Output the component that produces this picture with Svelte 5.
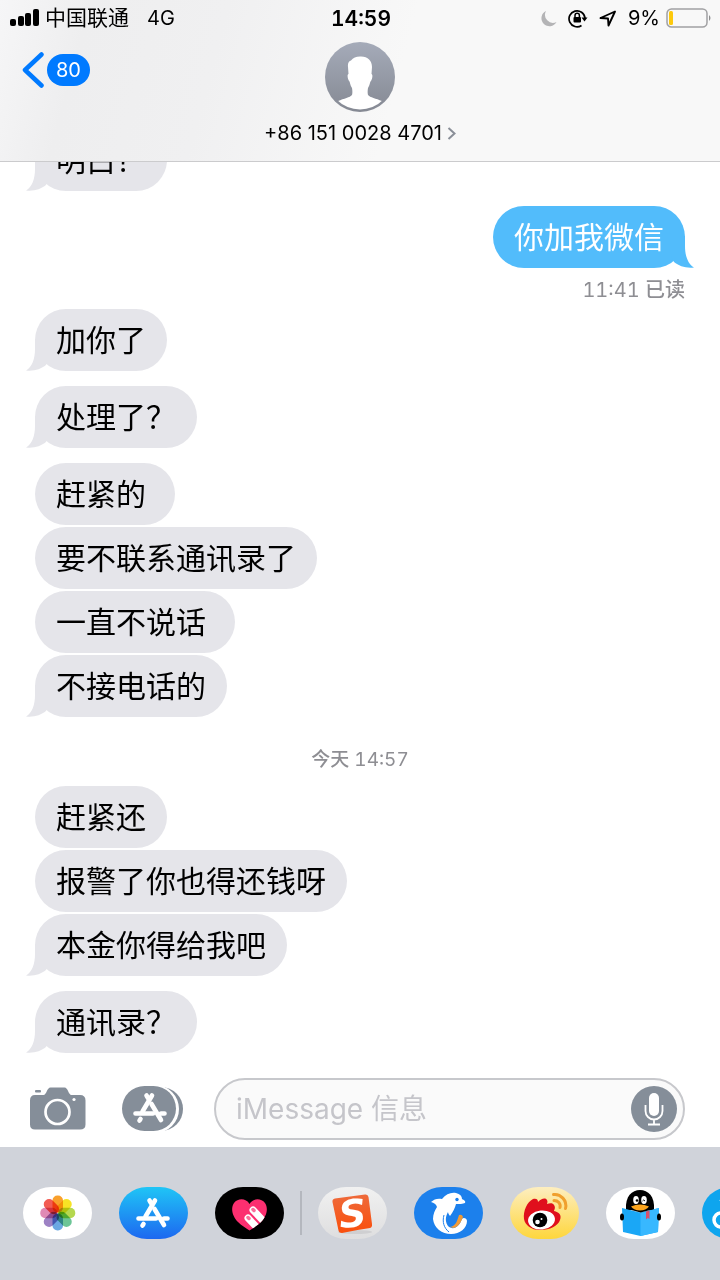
<script>
	let draft = $state('');

	// kind: in | out | receipt | time
	const thread = [
		{ kind: 'in', text: '明白？', tail: true },
		{ kind: 'out', text: '你加我微信', tail: true, first: true },
		{ kind: 'receipt', time: '11:41', text: '已读' },
		{ kind: 'in', text: '加你了', tail: true },
		{ kind: 'in', text: '处理了？', tail: true, first: true },
		{ kind: 'in', text: '赶紧的 ', first: true },
		{ kind: 'in', text: '要不联系通讯录了' },
		{ kind: 'in', text: '一直不说话 ' },
		{ kind: 'in', text: '不接电话的', tail: true },
		{ kind: 'time', text: '今天', time: '14:57' },
		{ kind: 'in', text: '赶紧还' },
		{ kind: 'in', text: '报警了你也得还钱呀' },
		{ kind: 'in', text: '本金你得给我吧', tail: true },
		{ kind: 'in', text: '通讯录？', tail: true, first: true }
	];

	const petals = ['#f9a02c', '#f7e325', '#b5d84f', '#6cc596', '#6ba8e2', '#9d82c4', '#e08ab5', '#f25c53'];
</script>

{#snippet storeGlyph()}
	<g fill="none" stroke="#fff" stroke-width="4.600" stroke-linecap="round">
		<path d="M19 2.500 9.500 18.500" />
		<path d="M13.500 2.500 15 5M18.500 11 28 27" />
		<path d="M2.500 20.500H20M28 20.500H31.500" />
		<path d="M7.500 26 6.500 27.500" />
	</g>
{/snippet}

<div class="screen">
	<header>
		<div class="status">
			<div class="carrier">
				<svg width="29" height="18" viewBox="0 0 29 18" aria-hidden="true">
					<rect x="0" y="10" width="6" height="7" rx="2" />
					<rect x="8" y="7" width="6" height="10" rx="2" />
					<rect x="15" y="4" width="6" height="13" rx="2" />
					<rect x="23" y="0" width="6" height="17" rx="2" />
				</svg>
				<span>中国联通</span>
				<span class="network">4G</span>
			</div>
			<time class="clock">14:59</time>
			<div class="indicators">
				<svg width="16" height="17" viewBox="0 0 16 17" aria-hidden="true">
					<path d="M5 1A8 8 0 1 0 15.500 12A8 8 0 0 1 5 1Z" fill="#b4b4b6" />
				</svg>
				<svg width="20" height="19" viewBox="0 0 20 19" aria-hidden="true">
					<path d="M13.500 16.500A8 8 0 1 1 17 9" fill="none" stroke="#000" stroke-width="1.700" />
					<path d="M13.500 8.500h6l-3 4z" />
					<rect x="5.500" y="8" width="7.500" height="5.500" rx="1" />
					<path d="M7 8V6.500a2.200 2.200 0 0 1 4.400 0V8" fill="none" stroke="#000" stroke-width="1.500" />
				</svg>
				<svg width="18" height="17" viewBox="0 0 18 17" aria-hidden="true">
					<path d="M16 1.500 1.500 8l7.500.500.500 7z" fill="none" stroke="#000" stroke-width="1.900" stroke-linejoin="round" />
				</svg>
				<span>9%</span>
				<svg class="battery" width="46" height="20" viewBox="0 0 46 20" aria-hidden="true">
					<rect x="1" y="1" width="40" height="18" rx="4.500" fill="none" stroke="#a0a0a2" stroke-width="1.500" />
					<rect x="3" y="3" width="4" height="14" rx="1.500" fill="#fdc90c" />
					<path d="M43 7q3 3 0 6z" fill="#8e8e90" />
				</svg>
			</div>
		</div>

		<nav>
			<button class="back" aria-label="返回 80">
				<svg width="22" height="36" viewBox="0 0 22 36" aria-hidden="true">
					<path d="M19.500 2.500 3 18l16.500 15.500" fill="none" stroke="#007aff" stroke-width="4.500" stroke-linecap="round" stroke-linejoin="round" />
				</svg>
				<span class="unread">80</span>
			</button>
			<button class="contact">
				<svg width="70" height="70" viewBox="0 0 70 70" aria-hidden="true">
					<defs>
						<linearGradient id="avatar" x2="0" y2="1">
							<stop offset="0" stop-color="#a5abb9" />
							<stop offset="1" stop-color="#858993" />
						</linearGradient>
						<clipPath id="face"><circle cx="35" cy="35" r="32.500" /></clipPath>
					</defs>
					<circle cx="35" cy="35" r="35" fill="url(#avatar)" />
					<path clip-path="url(#face)" fill="#fff" d="M35 14.500c7.500-.5 12 4 12 10.500l-.5 7c1.500.5 1 4-.5 7-1 0-1 4-3 7-.5 3-.5 5 0 7 2 2.500 8 3.500 14 6v11H13V59c6-2.500 12-3.500 14-6 .5-2 .5-4 0-7-2-3-2-7-3-7-1.500-3-2-6.500-.5-7l-.5-7c-.5-4 1-6 3-6.500 2-2.500 5-4 9-4z" />
				</svg>
				<span class="number">
					+86 151 0028 4701
					<svg width="9" height="13" viewBox="0 0 9 13" aria-hidden="true">
						<path d="m1.500 1 6 5.500-6 5.500" fill="none" stroke="#8a8f98" stroke-width="2" />
					</svg>
				</span>
			</button>
		</nav>
	</header>

	<main>
		{#each thread as item}
			{#if item.kind === 'time'}
				<p class="day"><b>{item.text}</b> {item.time}</p>
			{:else if item.kind === 'receipt'}
				<p class="receipt">{item.time} <b>{item.text}</b></p>
			{:else}
				<div class="bubble {item.kind}" class:first={item.first}>
					{#if item.tail}
						<svg class="tail" width="24" height="32" viewBox="0 0 24 32" aria-hidden="true">
							<path d="M10 0V10C10 20 7 28 1 31.500C9 32.500 16 30 21 26L24 20V0Z" />
						</svg>
					{/if}
					<span>{item.text}</span>
				</div>
			{/if}
		{/each}
	</main>

	<form class="composer" onsubmit={(e) => e.preventDefault()}>
		<button type="button" aria-label="相机">
			<svg width="57" height="44" viewBox="0 0 57 44" aria-hidden="true">
				<path fill="#858e99" d="M6 8h8.500c3 0 3.500-7.500 7-7.500h14c3.500 0 4 7.500 7 7.500H51q5.500 0 5.500 5.500v24q0 5-5.500 5H6q-5 0-5-5v-24Q1 8 6 8z" />
				<rect x="6" y="3" width="6" height="2.500" rx="1" fill="#858e99" />
				<circle cx="28.500" cy="25" r="12" fill="none" stroke="#fff" stroke-width="2.700" />
				<circle cx="45" cy="12.500" r="1.600" fill="#fff" />
			</svg>
		</button>
		<button type="button" aria-label="App">
			<svg width="62" height="46" viewBox="0 0 62 46" aria-hidden="true">
				<rect x="6" y="1" width="55" height="44" rx="22" fill="#858e99" />
				<rect x="-1" y="-1" width="58" height="48" rx="24" fill="#fff" />
				<rect x="0" y="0" width="54" height="45" rx="22.500" fill="#858e99" />
				<g transform="translate(11 7)">{@render storeGlyph()}</g>
			</svg>
		</button>
		<div class="field">
			<input type="text" aria-label="iMessage 信息" placeholder="iMessage 信息" bind:value={draft} />
			<button type="button" class="mic" aria-label="录音">
				<svg width="46" height="46" viewBox="0 0 46 46" aria-hidden="true">
					<circle cx="23" cy="23" r="23" fill="#858e99" />
					<rect x="18" y="7" width="10" height="23" rx="5" fill="#fff" />
					<path d="M14.500 19v6a8.500 8.500 0 0 0 17 0v-6M23 33.500v5M17 38.500h12" fill="none" stroke="#fff" stroke-width="1.800" />
				</svg>
			</button>
		</div>
	</form>

	<footer>
		<div class="apps">
			<button aria-label="照片" class="white">
				<svg viewBox="0 0 69 52" aria-hidden="true">
					<g class="petals">
						{#each petals as color, i}
							<rect x="29.500" y="8.500" width="10.500" height="17" rx="5" fill={color} transform="rotate({i * 45} 34.750 26)" />
						{/each}
					</g>
				</svg>
			</button>
			<button aria-label="App Store" class="store">
				<svg viewBox="0 0 69 52" aria-hidden="true">
					<g transform="translate(17 11)">{@render storeGlyph()}</g>
				</svg>
			</button>
			<button aria-label="Digital Touch" class="touch">
				<svg viewBox="0 0 69 52" aria-hidden="true">
					<defs>
						<clipPath id="heart"><path d="M34.500 17C31 11 23 11 19 16c-4 6-1 14 4 19 4 4 8 6 11.500 8.500C38 41 42 39 46 35c5-5 8-13 4-19-4-5-12-5-15.500 1z" /></clipPath>
					</defs>
					<g clip-path="url(#heart)">
						<path d="M0 0h69v52H0z" fill="#fc2f70" />
						<g fill="none" stroke-linecap="round">
							<path d="m38 23 16 17M33 31l16 17" stroke="#fff" stroke-width="7" />
							<path d="m38 22.500 1 1M33 30.500l1 1" stroke="#fa6f9b" stroke-width="3.500" />
						</g>
					</g>
				</svg>
			</button>
		</div>
		<hr />
		<div class="apps">
			<button aria-label="搜狗输入法" class="sogou">
				<svg viewBox="0 0 69 52" aria-hidden="true">
					<defs>
						<linearGradient id="orange" x2="0" y2="1">
							<stop offset="0" stop-color="#ee6a3b" />
							<stop offset="1" stop-color="#fa4f0c" />
						</linearGradient>
					</defs>
					<ellipse cx="37" cy="45" rx="17" ry="2" fill="#cfcfd1" />
					<path d="M17 11.500 47 7.500q3-.5 3.500 2.500l3.500 27q.5 3-2 4-14 2-28 5-3 0-3.500-2.500L14.500 15q-.5-3 2.500-3.500z" fill="url(#orange)" />
					<text x="34.500" y="40" transform="rotate(-6 34 26)" text-anchor="middle">S</text>
				</svg>
			</button>
			<button aria-label="携程" class="ctrip">
				<svg viewBox="0 0 69 52" aria-hidden="true">
					<path fill="#fff" d="M17 15c3-3 7-4 11-3 4-5 9-7 14-6 4 1 6 3 6 6 2 1 4 2 3 4-2 1-6 1-9 1-1 4-3 8-6 12-1-1-2-3-2-4-3 5-3 11 1 15 5 3 10 0 13-8 1-2 5-1 5 2 0 7-7 13-16 13-9 0-17-6-18-15 0-5 2-9 4-12-1-3-3-4-6-5z" />
					<path d="M45 28q3-1 4 2c-2 5-4 9-9 11-2 0-3-1-4-1 6-1 7-6 9-12z" fill="#f09a36" />
					<path d="M30 28c-2 7 0 13 5 17" fill="none" stroke="#1c80ec" stroke-width="1" />
					<circle cx="43" cy="12.500" r="1.700" fill="#1c80ec" />
				</svg>
			</button>
			<button aria-label="微博" class="weibo">
				<svg viewBox="0 0 69 52" aria-hidden="true">
					<path fill="#e00f1c" d="M14 32c-1-8 3-17 9-20 4-1 5 1 5 3 3-3 7-5 9-2 1 2 0 3 0 4 3-1 6-1 7 1 2 3 0 5 0 6 5 1 8 4 6 9-2 6-10 10-20 10-9 0-15-5-16-11z" />
					<ellipse cx="31.500" cy="33" rx="13.500" ry="9.500" transform="rotate(-6 31 33)" fill="#fff" />
					<circle cx="30" cy="33" r="7.300" />
					<circle cx="27.500" cy="35" r="2.300" fill="#fff" />
					<circle cx="31.500" cy="32" r="1" fill="#fff" />
					<path d="M43.500 7.500c7-1 14 6 12 14M44 13.500c4 0 7 3 6 7" fill="none" stroke="#f0a02d" stroke-width="3" stroke-linecap="round" />
				</svg>
			</button>
			<button aria-label="QQ阅读" class="white">
				<svg viewBox="0 0 69 52" aria-hidden="true">
					<path d="M20 23C19 9 26 3 34 3s15 6 14 20z" />
					<ellipse cx="30" cy="13" rx="2.800" ry="3.900" fill="#fff" />
					<ellipse cx="38" cy="13" rx="2.800" ry="3.900" fill="#fff" />
					<circle cx="31" cy="13.500" r="1.300" />
					<path d="M36.500 14q1-2 2.500 0" fill="none" stroke="#000" />
					<path d="m16 21 18 4.500L53 21l-1 24-17.500 4L17 45z" fill="#1aa7f6" />
					<path d="m34.500 26 18.500-5-1 24-17.500 4z" fill="#38b8ff" />
					<path d="M20 21.500 34.500 25.500 48 22v-3H20z" />
					<path d="M25 19.500q9-4 18 0-3 4-9 4t-9-4z" fill="#fba41c" />
					<path d="M40 24.500 43.500 23.500v8.500l-1.700-1-1.800 1.500z" fill="#d9506b" />
					<ellipse cx="16" cy="30" rx="2" ry="3.500" />
					<ellipse cx="53" cy="30" rx="2" ry="3.500" />
				</svg>
			</button>
			<button aria-label="更多" class="more">
				<svg viewBox="0 0 69 52" aria-hidden="true">
					<path d="M18 14q5-4 12-3" fill="none" stroke="#fff" stroke-width="2" />
					<circle cx="19" cy="33" r="7" fill="none" stroke="#fff" stroke-width="3.500" />
				</svg>
			</button>
		</div>
	</footer>
</div>

<style>
	:global(body) {
		margin: 0;
		background: #fff;
	}

	.screen {
		display: flex;
		flex-direction: column;
		height: 100vh;
		overflow: hidden;
		font-family: Inter, 'Noto Sans CJK SC', sans-serif;
		font-size: 20px;
		color: #000;
	}

	button {
		padding: 0;
		border: 0;
		background: none;
		font: inherit;
		color: inherit;
		cursor: pointer;
	}

	svg {
		display: block;
		flex: none;
	}

	p {
		margin: 0;
	}

	/* header */
	header {
		flex: none;
		background: linear-gradient(105deg, #f6f6f7 0%, #eeeeef 12%, #f0f0f1 30%, #f8f8f8 55%);
		border-bottom: 1px solid #cbcbcd;
	}

	.status,
	nav {
		display: grid;
		grid-template-columns: 1fr auto 1fr;
	}

	.status {
		align-items: center;
		height: 36px;
		padding: 0 8px 0 10px;
	}

	.carrier,
	.indicators {
		display: flex;
		align-items: center;
	}

	.carrier {
		gap: 6px;
		font-size: 21px;
		line-height: 24px;
	}

	.network {
		margin-left: 12px;
		font-size: 20px;
	}

	.clock {
		font-size: 21px;
		font-weight: 600;
		font-variant-numeric: tabular-nums;
	}

	.indicators {
		justify-content: flex-end;
		gap: 11px;
	}

	.battery {
		margin-left: -5px;
	}

	.back {
		display: flex;
		align-items: center;
		align-self: start;
		justify-self: start;
		gap: 3px;
		margin: 16px 0 0 22px;
	}

	.unread {
		padding: 0 9px;
		border-radius: 16px;
		background: #007aff;
		color: #fff;
		line-height: 32px;
	}

	.contact {
		display: flex;
		flex-direction: column;
		align-items: center;
		gap: 8px;
		padding: 6px 0 15px;
	}

	.number {
		display: flex;
		align-items: center;
		gap: 5px;
		line-height: 26px;
	}

	/* conversation */
	main {
		flex: 1;
		display: flex;
		flex-direction: column;
		justify-content: flex-end;
		align-items: flex-start;
		min-height: 0;
		padding: 0 35px;
		overflow: hidden;
	}

	.bubble {
		position: relative;
		flex: none;
		margin-top: 2px;
		padding: 9px 21px;
		border-radius: 31px;
		background: #e5e5ea;
		font-size: 30px;
		line-height: 44px;
	}

	.bubble span {
		display: block;
		white-space: pre;
	}

	.first {
		margin-top: 15px;
	}

	.out {
		align-self: flex-end;
		background: #52bcfb;
		color: #fff;
	}

	.bubble span {
		position: relative;
	}

	.tail {
		position: absolute;
		left: -10px;
		bottom: 0;
		fill: #e5e5ea;
	}

	.out .tail {
		left: auto;
		right: -10px;
		transform: scaleX(-1);
		fill: #52bcfb;
	}

	.receipt,
	.day {
		flex: none;
		color: #8e8e93;
		font-size: 19px;
		font-variant-numeric: tabular-nums;
		line-height: 26px;
	}

	.receipt b,
	.day b {
		font-weight: 500;
	}

	.receipt {
		align-self: flex-end;
		padding: 9px 0 4px;
		font-size: 20px;
	}

	.day {
		align-self: center;
		padding: 30px 0 11px;
	}

	/* composer */
	.composer {
		flex: none;
		display: flex;
		align-items: center;
		padding: 25px 35px 7px 29px;
	}

	.field {
		flex: 1;
		display: flex;
		align-items: center;
		min-width: 0;
		margin-left: 30px;
		padding: 6px 6px 6px 20px;
		border: 2px solid #c7c8cc;
		border-radius: 31px;
		background: #fafafa;
	}

	.composer > button + button {
		margin-left: 36px;
	}

	input {
		flex: 1;
		min-width: 0;
		padding: 0;
		border: 0;
		outline: 0;
		background: none;
		font: inherit;
		font-size: 28px;
	}

	input::placeholder {
		color: #c5c5ca;
		opacity: 1;
	}

	/* app drawer */
	footer {
		flex: none;
		display: flex;
		align-items: center;
		gap: 16px;
		padding: 40px 0 41px 23px;
		background: #d0d3da;
		overflow: hidden;
	}

	.apps {
		flex: none;
		display: flex;
		gap: 27px;
	}

	.apps button {
		width: 69px;
		height: 52px;
		border-radius: 28px / 26px;
		overflow: hidden;
	}

	hr {
		flex: none;
		width: 2px;
		height: 44px;
		margin: 0;
		border: 0;
		background: #b4b7be;
	}

	.white {
		background: #fff;
	}

	.petals {
		isolation: isolate;
	}

	.petals rect {
		mix-blend-mode: multiply;
	}

	.store {
		background: linear-gradient(#1fc5f6, #1d68f0);
	}

	.touch {
		background: #000;
	}

	.sogou {
		background: linear-gradient(#f1f1f1, #dededf);
	}

	.sogou text {
		fill: #fff;
		font: italic bold 38px 'DejaVu Sans', sans-serif;
	}

	.ctrip {
		background: #1c80ec;
	}

	.weibo {
		background: linear-gradient(#fdeec0, #fed63c);
	}

	.more {
		background: #0ea5ee;
	}
</style>
